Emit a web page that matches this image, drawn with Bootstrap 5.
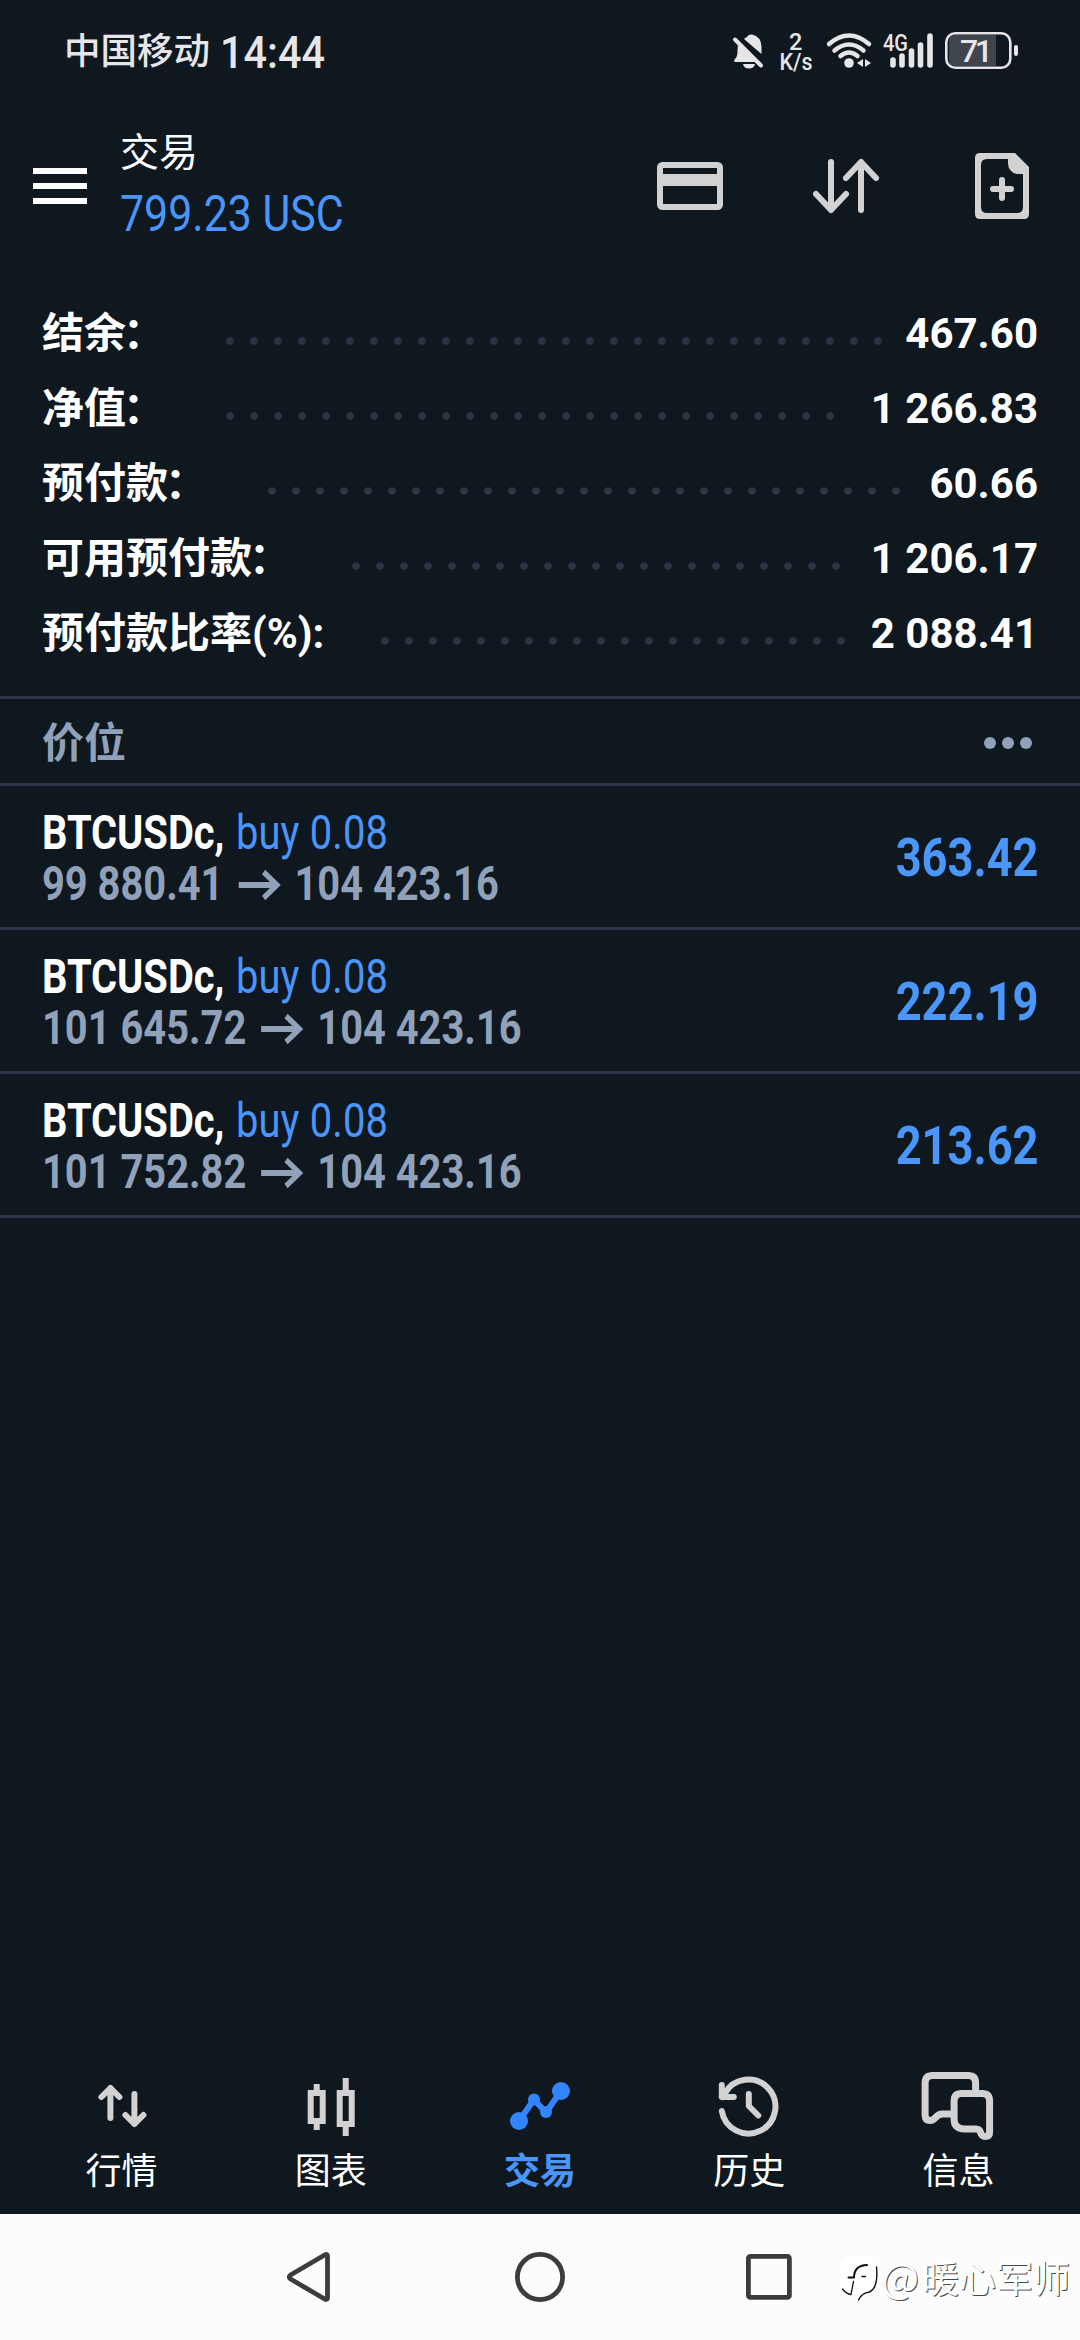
<!DOCTYPE html>
<html lang="zh-CN">
<head>
<meta charset="utf-8">
<meta name="viewport" content="width=device-width, initial-scale=1">
<title>交易</title>
<link href="https://cdn.jsdelivr.net/npm/bootstrap@5.3.0/dist/css/bootstrap.min.css" rel="stylesheet">
<style>
:root{--ink:#0f171f;--rule:#2b3544;--muted:#90a1b9;--blue:#4a96fa;--icon:#d2d2d2;--sys:#e6e6e8}
body{background:var(--ink);color:#fff;font-family:Roboto,"Noto Sans CJK SC",sans-serif;width:1080px;height:2340px;overflow:hidden}
svg{display:block;flex:none;overflow:visible}
.ln{fill:none;stroke:var(--icon);stroke-width:6;stroke-linecap:round;stroke-linejoin:round}
.status-bar{height:100px;padding-left:64px;padding-right:62px;color:var(--sys)}
.carrier{font-size:36.5px;font-weight:500;line-height:100px;padding-top:3px}
.clock{font-size:44px;font-weight:500;line-height:100px;margin-left:10px;transform:scaleX(.94);transform-origin:left;padding-top:5px}
.app-bar{height:172px;padding-left:33px;padding-right:51px}
.app-heading{margin-left:33px;padding-bottom:4px}
.app-title{font-size:39px;line-height:60px}
.app-profit{font-size:50.6px;line-height:62px;color:var(--blue)}
.squeeze{display:inline-block;white-space:nowrap;transform:scaleX(.838);transform-origin:left center}
.app-profit .squeeze{transform:scaleX(.848)}
.summary{padding:24px 42px 25px 42px;border-bottom:3px solid var(--rule)}
.sum-row{height:75px;font-size:42px;font-weight:700;line-height:75px;white-space:nowrap}
.colon{margin-left:-3px}
.leader{height:8px;margin-top:15px;margin-left:53px;background:radial-gradient(circle at 12px 4px,var(--rule) 3.4px,transparent 4.1px) 0 0/24px 8px repeat-x}
.sum-row:last-child .leader{margin-left:49px}
.section-head{height:87px;padding:3px 42px 0;font-size:42px;font-weight:700;color:var(--muted);border-bottom:3px solid var(--rule)}
.section-head span{padding-top:2px}
.deal{height:144px;padding:0 41px 0 42px;border-bottom:3px solid var(--rule);font-size:48px;line-height:51px}
.deal-info{padding-top:3px;transform:scaleX(.83)}
.deal-side{color:var(--blue);font-weight:400;letter-spacing:.2px;margin-left:2px}
.deal-price{color:var(--muted);font-weight:700}
.deal-arrow{margin:2px 17.5px 0 18px;fill:none;stroke:var(--muted);stroke-width:6}
.deal-value{font-size:54px;font-weight:700;color:var(--blue);transform-origin:right center;padding-top:2px}
.tabs{padding:0 17px 17px}
.tab{font-size:36px;line-height:50px}
.tab svg{margin-bottom:1px}
.tab-active{color:var(--blue)}
.sys-nav{height:126px;background:#fcfcfc}
.sys-nav .ln{stroke:#3c3c3c;stroke-width:4.8}
.stamp{right:10px;top:37px;color:#fff;font-family:"Noto Sans CJK SC",sans-serif;font-size:37px;line-height:50px;text-shadow:1px 1px 0 #4a4a4a}
.stamp-at{font-size:40px;margin-right:3px}
</style>
</head>
<body class="d-flex flex-column">

<header class="status-bar d-flex align-items-center">
  <div class="carrier">中国移动</div>
  <div class="clock">14:44</div>
  <div class="d-flex align-items-center ms-auto">
    <svg width="47" height="44" viewBox="733 28 47 44" fill="#e6e6e8"><path d="M744 39q1.500-1.500 3-2 1-3 5-2.500 9 2 9.500 12V54zM738 43 757 62H735q-2-1 0-3 2.500-2 2.500-8zM743 64h12q-1 4.500-6 4.500t-6-4.500z"/><path d="M735 39.500 761 65.500" stroke="#e6e6e8" stroke-width="4" stroke-linecap="round"/></svg>
    <svg width="47" height="44" viewBox="780 28 47 44" fill="#e6e6e8" font-family="Roboto" font-weight="500"><text x="789" y="50" font-size="23.500">2</text><text x="779.500" y="69.500" font-size="24" textLength="33" lengthAdjust="spacingAndGlyphs">K/s</text></svg>
    <svg width="56" height="44" viewBox="827 28 56 44" fill="none" stroke="#e6e6e8" stroke-width="4.500" stroke-linecap="round"><path d="M829 44q20-17 40 0M834.500 50.500q14.500-12 29 0M840.500 56q8.500-7 17 0"/><circle cx="849" cy="63" r="4.800" fill="#e6e6e8" stroke="none"/><path d="M857 63l6-4v8zM871 63l-6 4v-8z" fill="#e6e6e8" stroke="none"/></svg>
    <svg width="62" height="44" viewBox="883 28 62 44" fill="#e6e6e8"><text x="883" y="50.500" font-family="Roboto" font-weight="500" font-size="23.500" textLength="25" lengthAdjust="spacingAndGlyphs">4G</text><path d="M893 60v5M902 56v9M911.500 51v14M920.500 45v20M930 36v29" stroke="#e6e6e8" stroke-width="5.600" stroke-linecap="round"/></svg>
    <svg width="73" height="44" viewBox="945 28 73 44"><path d="M955 35H996V66H955q-6 0-6-6V41q0-6 6-6z" fill="#3f454d"/><rect x="946.300" y="33.300" width="64" height="34.500" rx="9" fill="none" stroke="#e6e6e8" stroke-width="2.600"/><rect x="1014" y="45" width="4" height="11" rx="2" fill="#e6e6e8"/><text x="960" y="62" font-family="Roboto" font-size="32" font-weight="500" fill="#e6e6e8" textLength="33">71</text></svg>
  </div>
</header>

<nav class="app-bar d-flex align-items-center">
  <svg width="54" height="36" viewBox="0 0 54 36" fill="#fff"><path d="M0 0h54v6H0zM0 15h54v6H0zM0 30h54v6H0z"/></svg>
  <div class="app-heading d-flex flex-column">
    <div class="app-title">交易</div>
    <div class="app-profit"><span class="squeeze">799.23 USC</span></div>
  </div>
  <div class="d-flex align-items-center ms-auto">
    <svg width="66" height="66" viewBox="657 153 66 66"><rect class="ln" x="660" y="165" width="60" height="42" rx="2.500"/><path d="M660 174h60v12h-60z" fill="#d2d2d2"/></svg>
    <svg width="66" height="66" viewBox="813 153 66 66" style="margin-left:90px"><path class="ln" d="M831 162v48M816 194l15 16 15-16M861 210v-48M846 178l15-16 15 16"/></svg>
    <svg width="54" height="66" viewBox="975 153 54 66" style="margin-left:96px"><path fill="#d2d2d2" fill-rule="evenodd" d="M980 153h35l14 14v47q0 5-5 5h-44q-5 0-5-5v-56q0-5 5-5zM987 159q-6 0-6 6v42q0 6 6 6h30q6 0 6-6V174h-6q-9-2-9-11v-4z"/><path class="ln" d="M993 189h18M1002 180v18"/></svg>
  </div>
</nav>

<section class="summary">
  <div class="sum-row d-flex align-items-center"><span>结余<span class="colon">：</span></span><i class="leader" style="width:672px"></i><span class="ms-auto">467.60</span></div>
  <div class="sum-row d-flex align-items-center"><span>净值<span class="colon">：</span></span><i class="leader" style="width:624px"></i><span class="ms-auto">1 266.83</span></div>
  <div class="sum-row d-flex align-items-center"><span>预付款<span class="colon">：</span></span><i class="leader" style="width:648px"></i><span class="ms-auto">60.66</span></div>
  <div class="sum-row d-flex align-items-center"><span>可用预付款<span class="colon">：</span></span><i class="leader" style="width:504px"></i><span class="ms-auto">1 206.17</span></div>
  <div class="sum-row d-flex align-items-center"><span>预付款比率(%):</span><i class="leader" style="width:480px"></i><span class="ms-auto">2 088.41</span></div>
</section>

<div class="section-head d-flex align-items-center justify-content-between">
  <span>价位</span>
  <svg width="54" height="12" viewBox="0 0 54 12" fill="#90a1b9"><circle cx="6" cy="6" r="6"/><circle cx="24" cy="6" r="6"/><circle cx="42" cy="6" r="6"/></svg>
</div>

<main>
  <div class="deal d-flex align-items-center justify-content-between">
    <div class="deal-info squeeze"><div class="fw-bold">BTCUSDc, <span class="deal-side">buy 0.08</span></div>
      <div class="deal-price d-flex align-items-center"><span>99 880.41</span><svg class="deal-arrow" width="50" height="30" viewBox="0 0 50 30"><path d="M0 15h46M30 2l16 13-16 13"/></svg><span>104 423.16</span></div></div>
    <div class="deal-value squeeze">363.42</div>
  </div>
  <div class="deal d-flex align-items-center justify-content-between">
    <div class="deal-info squeeze"><div class="fw-bold">BTCUSDc, <span class="deal-side">buy 0.08</span></div>
      <div class="deal-price d-flex align-items-center"><span>101 645.72</span><svg class="deal-arrow" width="50" height="30" viewBox="0 0 50 30"><path d="M0 15h46M30 2l16 13-16 13"/></svg><span>104 423.16</span></div></div>
    <div class="deal-value squeeze">222.19</div>
  </div>
  <div class="deal d-flex align-items-center justify-content-between">
    <div class="deal-info squeeze"><div class="fw-bold">BTCUSDc, <span class="deal-side">buy 0.08</span></div>
      <div class="deal-price d-flex align-items-center"><span>101 752.82</span><svg class="deal-arrow" width="50" height="30" viewBox="0 0 50 30"><path d="M0 15h46M30 2l16 13-16 13"/></svg><span>104 423.16</span></div></div>
    <div class="deal-value squeeze">213.62</div>
  </div>
</main>

<nav class="tabs row g-0 mt-auto text-center">
  <div class="tab col d-flex flex-column align-items-center">
    <svg width="80" height="80" viewBox="81.600 2066 80 80"><path class="ln" d="M110 2118v-30M101 2097l9-9 9 9M134 2094v30M125 2115l9 9 9-9"/></svg>行情</div>
  <div class="tab col d-flex flex-column align-items-center">
    <svg width="80" height="80" viewBox="290.800 2066 80 80"><path class="ln" style="stroke-linecap:butt;stroke-linejoin:miter" d="M310.500 2093h12v28h-12zM316.500 2084v8M316.500 2122v8M339.500 2093h12v31h-12zM345.500 2078v14M345.500 2124v12"/></svg>图表</div>
  <div class="tab tab-active col d-flex flex-column align-items-center fw-bold">
    <svg width="80" height="80" viewBox="500 2066 80 80" fill="#3385ff"><path d="M519 2121l15-21.500 12 13 15-21.500" fill="none" stroke="#3385ff" stroke-width="6"/><circle cx="519" cy="2121" r="9"/><circle cx="534" cy="2099.500" r="6"/><circle cx="546" cy="2112" r="6"/><circle cx="561" cy="2091" r="9"/></svg>交易</div>
  <div class="tab col d-flex flex-column align-items-center">
    <svg width="80" height="80" viewBox="709.200 2066 80 80"><path class="ln" d="M722 2111A27 27 0 1 0 725 2093.500L722 2097M722 2085v12h12M749 2094v12l9.500 9.500"/><path d="M722 2097v-6l7-2-2 8z" fill="#d2d2d2"/></svg>历史</div>
  <div class="tab col d-flex flex-column align-items-center">
    <svg width="80" height="80" viewBox="918.400 2066 80 80"><path class="ln" style="stroke-width:7;stroke-linecap:butt" d="M976 2091v-8q0-7.500-7.500-7.500H933q-7.500 0-7.500 7.500v32q0 5.500 5 5.500 3 0 5.500-3t6-3.500h11M962 2093.500h20.500q7.500 0 7.500 7.500v31q0 4.500-4.500 4.500-3.500 0-4.500-4-1-3.500-4.500-3.500H964q-9.500-1-9.500-9.500v-18.500q0-7.500 7.500-7.500z"/></svg>信息</div>
</nav>

<footer class="sys-nav position-relative d-flex align-items-center">
  <svg width="44" height="50" viewBox="287 2252 44 50" style="margin-left:287px"><path class="ln" d="M325.500 2254.500q2 0 2 2v41q0 2-2 2L290.500 2279q-2.500-2 0-4z"/></svg>
  <svg width="50" height="50" viewBox="515 2252 50 50" style="margin-left:184px"><circle class="ln" cx="540" cy="2277" r="22.600"/></svg>
  <svg width="46" height="46" viewBox="746 2254 46 46" style="margin-left:181px"><rect class="ln" x="748.400" y="2256.400" width="41" height="41" rx="2"/></svg>
  <div class="stamp position-absolute d-flex align-items-center">
    <svg width="37" height="44" viewBox="839 2258 37 44" class="me-1"><path d="M851 2260h13q12 0 12 12v11q0 12-12 13l-8 6v-5h-6q-11-1-11-13v-11q0-13 12-13z" fill="#fff"/><g fill="none" stroke="#111" stroke-linecap="round" stroke-linejoin="round"><path d="M875.500 2270q2 21-7 25-8 1-11 8" stroke-width="1.400"/><path d="M847.500 2280.500h5.500q0-12 13-12.500" stroke-width="2"/><path d="M861 2279.500h3.500M841.500 2292q4 5 8.500 5.500l2.500-13" stroke-width="1.300"/></g></svg><span><span class="stamp-at">@</span>暖心军师</span></div>
</footer>

<script src="https://cdn.jsdelivr.net/npm/bootstrap@5.3.0/dist/js/bootstrap.bundle.min.js"></script>
</body>
</html>
